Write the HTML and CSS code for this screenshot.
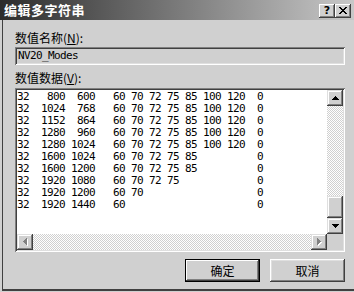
FILE: index.html
```
<!DOCTYPE html>
<html>
<head>
<meta charset="utf-8">
<link rel="stylesheet" href="styles.css">
</head>
<body>
<div class="win">
  <div class="title">
    <span class="title-text">编辑多字符串</span>
    <div class="tbtns">
      <div class="tbtn help">?</div>
      <div class="tbtn close">
        <svg width="8" height="7" viewBox="0 0 8 7" shape-rendering="crispEdges"><path d="M0 0h2v1h1v1h2V1h1V0h2v1H7v1H6v1H5v1h1v1h1v1h1v1H6V6H5V5H3v1H2v1H0V6h1V5h1V4h1V3H2V2H1V1H0z" fill="#000"/></svg>
      </div>
    </div>
  </div>
  <div class="body">
    <div class="lbl lbl-name">数值名称(<u>N</u>):</div>
    <div class="field">NV20_Modes</div>
    <div class="lbl lbl-data">数值数据(<u>V</u>):</div>
    <div class="databox">
      <pre class="text">32   800  600   60 70 72 75 85 100 120  0
32  1024  768   60 70 72 75 85 100 120  0
32  1152  864   60 70 72 75 85 100 120  0
32  1280  960   60 70 72 75 85 100 120  0
32  1280 1024   60 70 72 75 85 100 120  0
32  1600 1024   60 70 72 75 85          0
32  1600 1200   60 70 72 75 85          0
32  1920 1080   60 70 72 75             0
32  1920 1200   60 70                   0
32  1920 1440   60                      0</pre>
      <div class="vscroll">
        <div class="sbtn">
          <svg width="7" height="4" viewBox="0 0 7 4" shape-rendering="crispEdges"><path d="M3 0h1v1h1v1h1v1h1v1H0V3h1V2h1V1h1z" fill="#000"/></svg>
        </div>
        <div class="track"></div>
        <div class="thumb"></div>
        <div class="sbtn">
          <svg width="7" height="4" viewBox="0 0 7 4" shape-rendering="crispEdges"><path d="M0 0h7v1H6v1H5v1H4v1H3V3H2V2H1V1H0z" fill="#000"/></svg>
        </div>
      </div>
      <div class="hscroll">
        <div class="sbtn">
          <svg width="5" height="8" viewBox="0 0 5 8" shape-rendering="crispEdges"><path d="M4 1h1v7H4V7H3V6H2V5H1V4h1V3h1V2h1z" fill="#fff"/><path d="M3 0h1v7H3V6H2V5H1V4H0V3h1V2h1V1h1z" fill="#808080"/></svg>
        </div>
        <div class="track"></div>
        <div class="sbtn">
          <svg width="5" height="8" viewBox="0 0 5 8" shape-rendering="crispEdges"><path d="M1 1h1v1h1v1h1v1h1v1H4v1H3v1H2v1H1z" fill="#fff"/><path d="M0 0h1v1h1v1h1v1h1v1H3v1H2v1H1v1H0z" fill="#808080"/></svg>
        </div>
      </div>
      <div class="corner"></div>
    </div>
    <div class="btns">
      <div class="btn default">确定</div>
      <div class="btn">取消</div>
    </div>
  </div>
</div>
</body>
</html>
```

FILE: styles.css
```
html, body {
  margin: 0;
  padding: 0;
}
body {
  width: 354px;
  height: 292px;
  overflow: hidden;
  background: #d0d0d0;
  font-family: "Noto Sans CJK SC", "Noto Sans", sans-serif;
  font-size: 12px;
  color: #000;
}
.win {
  height: 292px;
  display: flex;
  flex-direction: column;
}
.title {
  flex: none;
  height: 20px;
  display: flex;
  align-items: flex-start;
  background: linear-gradient(90deg, #2c2c2c 0%, #7a7a7a 50%, #c8c8c8 100%);
}
.title-text {
  color: #fff;
  font-weight: bold;
  font-size: 13px;
  line-height: 20px;
  padding-left: 4px;
  letter-spacing: 0.5px;
}
.tbtns {
  margin-left: auto;
  margin-right: 3px;
  margin-top: 4px;
  display: flex;
}
.tbtn {
  width: 16px;
  height: 14px;
  box-sizing: border-box;
  background: #d0d0d0;
  box-shadow: inset -1px -1px #404040, inset 1px 1px #fff, inset -2px -2px #808080;
  display: flex;
  align-items: center;
  justify-content: center;
}
.help {
  font-family: "DejaVu Sans", sans-serif;
  font-weight: bold;
  font-size: 11px;
  line-height: 14px;
}
.close svg {
  display: block;
  margin-top: -1px;
}
.body {
  flex: 1;
  margin-left: 2px;
  border-left: 1px solid #404040;
  border-bottom: 2px solid #404040;
  margin-bottom: 1px;
  padding: 0 9px 0 12px;
  display: flex;
  flex-direction: column;
}
.lbl {
  height: 14px;
  line-height: 14px;
  white-space: nowrap;
}
.lbl u {
  text-decoration: underline;
  text-underline-offset: 1px;
}
.lbl-name {
  margin-top: 11px;
}
.field {
  margin-top: 2px;
  height: 18px;
  box-sizing: border-box;
  background: #d0d0d0;
  box-shadow: inset 1px 1px #808080, inset -1px -1px #fff, inset 2px 2px #404040, inset -2px -2px #dfdfdf;
  padding-left: 3px;
  font-family: "DejaVu Sans Mono", monospace;
  font-size: 11px;
  letter-spacing: -0.62px;
  line-height: 18px;
}
.lbl-data {
  margin-top: 6px;
}
.databox {
  margin-top: 3px;
  height: 164px;
  box-sizing: border-box;
  padding: 2px;
  background: #fff;
  box-shadow: inset 1px 1px #808080, inset -1px -1px #fff, inset 2px 2px #404040, inset -2px -2px #dfdfdf;
  display: grid;
  grid-template-columns: 1fr 16px;
  grid-template-rows: 1fr 16px;
}
.text {
  margin: 0;
  padding: 1px 0 0 0;
  font-family: "DejaVu Sans Mono", monospace;
  font-size: 11px;
  letter-spacing: -0.62px;
  line-height: 12px;
  overflow: hidden;
}
.vscroll {
  display: flex;
  flex-direction: column;
}
.hscroll {
  display: flex;
}
.sbtn {
  flex: none;
  width: 16px;
  height: 16px;
  box-sizing: border-box;
  background: #d0d0d0;
  box-shadow: inset -1px -1px #404040, inset 1px 1px #dfdfdf, inset -2px -2px #808080, inset 2px 2px #fff;
  display: flex;
  align-items: center;
  justify-content: center;
}
.sbtn svg {
  display: block;
}
.track {
  flex: 1;
  background-color: #fff;
  background-image: repeating-conic-gradient(#d0d0d0 0 25%, #fff 0 50%);
  background-size: 2px 2px;
}
.thumb {
  flex: none;
  height: 22px;
  background: #d0d0d0;
  box-shadow: inset -1px -1px #404040, inset 1px 1px #dfdfdf, inset -2px -2px #808080, inset 2px 2px #fff;
}
.corner {
  background: #d0d0d0;
}
.btns {
  margin-top: 7px;
  display: flex;
  justify-content: flex-end;
  gap: 10px;
}
.btn {
  width: 75px;
  height: 23px;
  box-sizing: border-box;
  background: #d0d0d0;
  box-shadow: inset -1px -1px #404040, inset 1px 1px #fff, inset -2px -2px #808080, inset 2px 2px #dfdfdf;
  display: flex;
  align-items: center;
  justify-content: center;
  line-height: 14px;
}
.btn.default {
  box-shadow: inset 0 0 0 1px #000, inset -2px -2px #404040, inset 2px 2px #fff, inset -3px -3px #808080;
}
```
